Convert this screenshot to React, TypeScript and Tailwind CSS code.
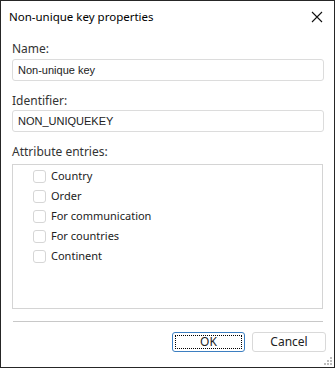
import React, { useState } from 'react';

const entries = ['Country', 'Order', 'For communication', 'For countries', 'Continent'];

export default function App() {
  const [name, setName] = useState('Non-unique key');
  const [ident, setIdent] = useState('NON_UNIQUEKEY');
  const [checked, setChecked] = useState<boolean[]>(entries.map(() => false));

  return (
    <div className="w-[335px] h-[368px] bg-white border border-[#262626] flex flex-col text-[#333] font-['Noto_Sans',sans-serif] select-none">
      <div className="h-[31px] flex items-center justify-between pl-[8px] pr-[11px]">
        <span className="text-[11.5px] text-black">Non-unique key properties</span>
        <svg width="12" height="12" viewBox="0 0 12 12">
          <path d="M1 1 L11 11 M11 1 L1 11" stroke="#111" strokeWidth="1.1" />
        </svg>
      </div>

      <div className="flex flex-col px-[11px] pt-[9px]">
        <label className="text-[12px] leading-[16px]">Name:</label>
        <input
          value={name}
          onChange={(e) => setName(e.target.value)}
          className="mt-[2px] h-[22px] w-[312px] border border-[#dcdcdc] rounded-[3px] px-[5px] text-[11px] font-['Liberation_Sans',sans-serif] text-[#222] outline-none"
        />

        <label className="mt-[12px] text-[12px] leading-[16px]">Identifier:</label>
        <input
          value={ident}
          onChange={(e) => setIdent(e.target.value)}
          className="mt-[1px] h-[22px] w-[312px] border border-[#dcdcdc] rounded-[3px] px-[5px] text-[11px] font-['Liberation_Sans',sans-serif] text-[#222] outline-none"
        />

        <label className="mt-[12px] text-[12px] leading-[16px]">Attribute entries:</label>
        <div className="mt-[4px] h-[145px] w-[311px] border border-[#d4d4d4] pt-[1px] pl-[20px] flex flex-col">
          {entries.map((e, i) => (
            <div
              key={e}
              className="h-[20px] flex items-center gap-[5px] cursor-default"
              onClick={() => setChecked(c => c.map((v, j) => (j === i ? !v : v)))}
            >
              <span className="w-[13px] h-[13px] border border-[#d6d6d6] rounded-[3px] bg-white flex items-center justify-center">
                {checked[i] && (
                  <svg width="9" height="9" viewBox="0 0 9 9">
                    <path d="M1 4.5 L3.5 7 L8 1.5" stroke="#333" strokeWidth="1.3" fill="none" />
                  </svg>
                )}
              </span>
              <span className="text-[11px] text-[#222]">{e}</span>
            </div>
          ))}
        </div>

        <div className="mt-[12px] ml-[1px] h-px w-[310px] bg-[#c8c8c8]" />

        <div className="mt-[10px] flex justify-end gap-[7px] mr-[-3px]">
          <button className="w-[73px] h-[20px] border border-[#3d7fc1] rounded-[3px] text-[12px] text-[#222] flex items-center justify-center">
            <span className="w-[67px] h-[14px] border border-dotted border-black flex items-center justify-center leading-none">OK</span>
          </button>
          <button className="w-[74px] h-[20px] border border-[#d9d9d9] rounded-[3px] text-[12px] text-[#222]">Cancel</button>
        </div>
      </div>

      <div className="flex-1" />
      <div className="flex justify-end pr-[2px] pb-[2px]">
        <svg width="10" height="10" viewBox="0 0 10 10">
          {[[8, 2], [8, 5], [8, 8], [5, 5], [5, 8], [2, 8]].map(([x, y]) => (
            <rect key={`${x}-${y}`} x={x} y={y} width="2" height="2" fill="#bdbdbd" />
          ))}
        </svg>
      </div>
    </div>
  );
}
